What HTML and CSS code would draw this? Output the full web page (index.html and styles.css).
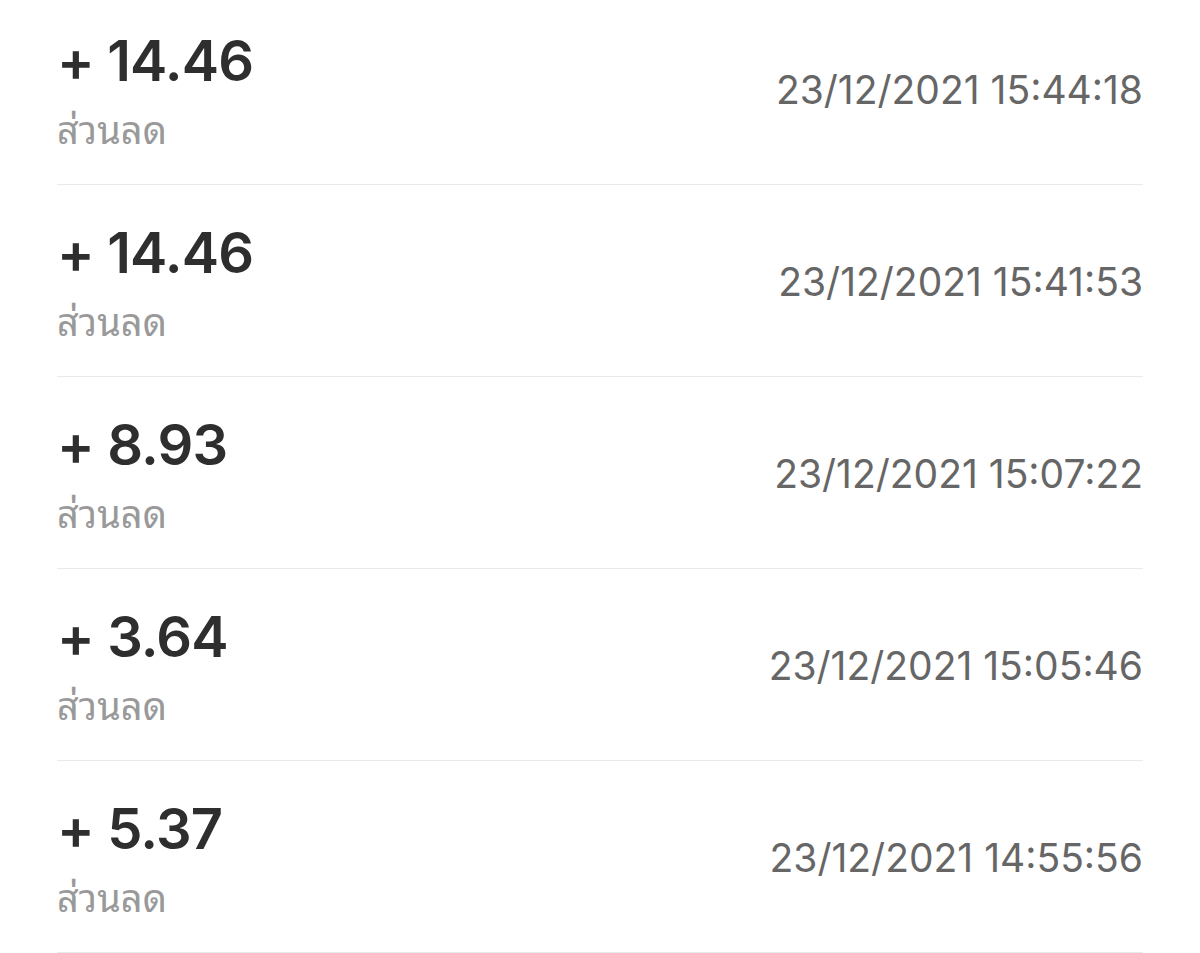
FILE: index.html
```html
<!DOCTYPE html>
<html lang="th">
<head>
<meta charset="utf-8">
<link rel="stylesheet" href="styles.css">
</head>
<body>
<ul class="list">
  <li class="row">
    <div class="left"><div class="amount">+ 14.46</div><div class="label">ส่วนลด</div></div>
    <div class="date">23/12/2021 15:44:18</div>
  </li>
  <li class="row">
    <div class="left"><div class="amount">+ 14.46</div><div class="label">ส่วนลด</div></div>
    <div class="date">23/12/2021 15:41:53</div>
  </li>
  <li class="row">
    <div class="left"><div class="amount">+ 8.93</div><div class="label">ส่วนลด</div></div>
    <div class="date">23/12/2021 15:07:22</div>
  </li>
  <li class="row">
    <div class="left"><div class="amount">+ 3.64</div><div class="label">ส่วนลด</div></div>
    <div class="date">23/12/2021 15:05:46</div>
  </li>
  <li class="row">
    <div class="left"><div class="amount">+ 5.37</div><div class="label">ส่วนลด</div></div>
    <div class="date">23/12/2021 14:55:56</div>
  </li>
</ul>
</body>
</html>
```
FILE: styles.css
```css
html, body {
  margin: 0;
  padding: 0;
  background: #fff;
  overflow: hidden;
}
body {
  font-family: Inter, "Noto Sans", "Noto Sans Thai", sans-serif;
}
.list {
  list-style: none;
  margin: -7px 0 0;
  padding: 0 57px;
}
.row {
  height: 191px;
  border-bottom: 1px solid #e9e9e9;
  display: flex;
  justify-content: space-between;
  align-items: center;
}
.left {
  align-self: flex-start;
  padding-top: 38px;
  display: flex;
  flex-direction: column;
}
.amount {
  font-size: 56px;
  line-height: 60px;
  font-weight: 600;
  letter-spacing: -0.8px;
  color: #2e2e2e;
}
.label {
  padding-top: 9px;
  font-family: "Noto Sans Thai Looped", Loma, Garuda, "Tlwg Typo", "Noto Sans Thai", Inter, sans-serif;
  font-size: 38px;
  line-height: 54px;
  color: #999;
}
.date {
  margin-top: 2px;
  font-size: 39px;
  font-weight: 400;
  color: #666;
}
```
